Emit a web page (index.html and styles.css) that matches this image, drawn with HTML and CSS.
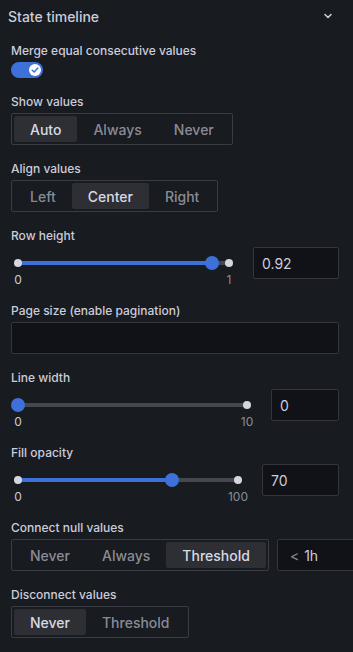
FILE: index.html
```html
<!DOCTYPE html>
<html lang="en">
<head>
  <meta charset="UTF-8" />
  <meta name="viewport" content="width=device-width, initial-scale=1" />
  <title>State timeline – Options</title>
  <link rel="stylesheet" href="styles.css">
</head>
<body>

  <div class="pane">
    <header class="pane-header">
      <h1>State timeline</h1>
      <svg class="chevron" width="10" height="10" viewBox="0 0 10 10">
        <path d="M2 3.5 L5 6.5 L8 3.5" fill="none" stroke="#ccccdc" stroke-width="1.6" stroke-linecap="round" stroke-linejoin="round"/>
      </svg>
    </header>

    <div class="pane-body">

      <div class="field">
        <label>Merge equal consecutive values</label>
        <div class="toggle on">
          <span class="knob">
            <svg width="8" height="8" viewBox="0 0 8 8">
              <path d="M1.2 4.2 L3.2 6 L6.8 2" fill="none" stroke="#3d71d9" stroke-width="1.5" stroke-linecap="round" stroke-linejoin="round"/>
            </svg>
          </span>
        </div>
      </div>

      <div class="field">
        <label>Show values</label>
        <div class="radio-group">
          <button class="active">Auto</button>
          <button>Always</button>
          <button>Never</button>
        </div>
      </div>

      <div class="field">
        <label>Align values</label>
        <div class="radio-group">
          <button>Left</button>
          <button class="active">Center</button>
          <button>Right</button>
        </div>
      </div>

      <div class="field">
        <label>Row height</label>
        <div class="slider-row">
          <div class="slider w-211">
            <div class="track">
              <div class="fill" style="width: 92%"></div>
              <span class="dot start"></span>
              <span class="dot end"></span>
              <span class="thumb" style="left: 92%"></span>
            </div>
            <div class="marks">
              <span class="on">0</span>
              <span>1</span>
            </div>
          </div>
          <input class="text-input" type="text" value="0.92">
        </div>
      </div>

      <div class="field">
        <label>Page size (enable pagination)</label>
        <input class="text-input wide" type="text" value="">
      </div>

      <div class="field">
        <label>Line width</label>
        <div class="slider-row">
          <div class="slider w-229">
            <div class="track">
              <div class="fill" style="width: 0%"></div>
              <span class="dot start"></span>
              <span class="dot end"></span>
              <span class="thumb" style="left: 0%"></span>
            </div>
            <div class="marks">
              <span class="on">0</span>
              <span>10</span>
            </div>
          </div>
          <input class="text-input" type="text" value="0">
        </div>
      </div>

      <div class="field">
        <label>Fill opacity</label>
        <div class="slider-row">
          <div class="slider w-220">
            <div class="track">
              <div class="fill" style="width: 70%"></div>
              <span class="dot start"></span>
              <span class="dot end"></span>
              <span class="thumb" style="left: 70%"></span>
            </div>
            <div class="marks">
              <span class="on">0</span>
              <span>100</span>
            </div>
          </div>
          <input class="text-input" type="text" value="70">
        </div>
      </div>

      <div class="field">
        <label>Connect null values</label>
        <div class="inline-row">
          <div class="radio-group">
            <button>Never</button>
            <button>Always</button>
            <button class="active">Threshold</button>
          </div>
          <div class="prefix-input">
            <span class="prefix">&lt;</span>
            <span class="value">1h</span>
          </div>
        </div>
      </div>

      <div class="field">
        <label>Disconnect values</label>
        <div class="radio-group">
          <button class="active">Never</button>
          <button>Threshold</button>
        </div>
      </div>

    </div>
  </div>

</body>
</html>
```

FILE: styles.css
```css
html, body {
  margin: 0;
  padding: 0;
  overflow: hidden;
}

body {
  font-family: Inter, "Noto Sans", sans-serif;
  background: #181b1f;
  color: #ccccdc;
  width: 353px;
  height: 652px;
}

.pane {
  width: 353px;
  overflow: hidden;
}

.pane-header {
  height: 32px;
  display: flex;
  align-items: center;
  justify-content: space-between;
  padding: 0 20px 0 8px;
}

.pane-header h1 {
  margin: 0;
  font-size: 14px;
  font-weight: 500;
  color: #ccccdc;
}

.chevron {
  display: block;
}

.pane-body {
  padding: 11px 14px 0 11px;
}

.field {
  margin-bottom: 16px;
}

.field label {
  display: block;
  font-size: 12px;
  font-weight: 500;
  line-height: 15px;
  margin-bottom: 4px;
  color: #ccccdc;
}

/* toggle */
.toggle {
  width: 32px;
  height: 16px;
  border-radius: 8px;
  background: #3d71d9;
  display: flex;
  align-items: center;
  justify-content: flex-end;
  padding: 0 2px;
  box-sizing: border-box;
}

.knob {
  width: 12px;
  height: 12px;
  border-radius: 50%;
  background: #fff;
  display: flex;
  align-items: center;
  justify-content: center;
}

.knob svg {
  display: block;
}

/* radio groups */
.radio-group {
  display: inline-flex;
  border: 1px solid #3a3c43;
  border-radius: 2px;
  padding: 2px;
  flex-shrink: 0;
}

.radio-group button {
  height: 26px;
  padding: 0 16px;
  border: none;
  border-radius: 2px;
  background: transparent;
  font-family: inherit;
  font-size: 14px;
  font-weight: 500;
  color: rgba(204, 204, 220, 0.65);
  cursor: pointer;
}

.radio-group button.active {
  background: #2d2f35;
  color: #d8d9e3;
}

/* inputs */
.text-input {
  box-sizing: border-box;
  height: 32px;
  background: #111217;
  border: 1px solid #34363c;
  border-radius: 2px;
  padding: 0 8px;
  font-family: inherit;
  font-size: 14px;
  color: #ccccdc;
  outline: none;
}

.text-input.wide {
  display: block;
  width: 100%;
}

/* slider */
.slider-row {
  display: flex;
  height: 40px;
}

.slider-row .text-input {
  flex: 1;
  min-width: 0;
}

.slider {
  margin: 0 24px 0 7px;
  padding-top: 14px;
}

.w-211 { width: 211px; }
.w-229 { width: 229px; }
.w-220 { width: 220px; }

.track {
  position: relative;
  height: 4px;
  border-radius: 2px;
  background: #46484f;
}

.fill {
  height: 4px;
  border-radius: 2px;
  background: #3d71d9;
}

.dot {
  position: absolute;
  top: -2px;
  width: 8px;
  height: 8px;
  border-radius: 50%;
  background: #d5d6e0;
}

.dot.start { left: -4px; }
.dot.end { right: -4px; }

.thumb {
  position: absolute;
  top: -5px;
  width: 14px;
  height: 14px;
  margin-left: -7px;
  border-radius: 50%;
  background: #3d71d9;
}

.marks {
  display: flex;
  justify-content: space-between;
  margin-top: 7px;
  font-size: 12px;
  line-height: 15px;
  color: rgba(204, 204, 220, 0.65);
}

.marks span:first-child {
  transform: translateX(-50%);
}

.marks span:last-child {
  transform: translateX(50%);
}

.marks .on {
  color: #ccccdc;
}

/* connect null row */
.inline-row {
  display: flex;
  gap: 8px;
}

.prefix-input {
  flex-shrink: 0;
  box-sizing: border-box;
  width: 100px;
  height: 32px;
  background: #111217;
  border: 1px solid #34363c;
  border-radius: 2px;
  display: flex;
  align-items: center;
  padding-left: 12px;
  font-size: 14px;
}

.prefix {
  color: rgba(204, 204, 220, 0.65);
  margin-right: 5px;
}

.value {
  color: #ccccdc;
}
```
